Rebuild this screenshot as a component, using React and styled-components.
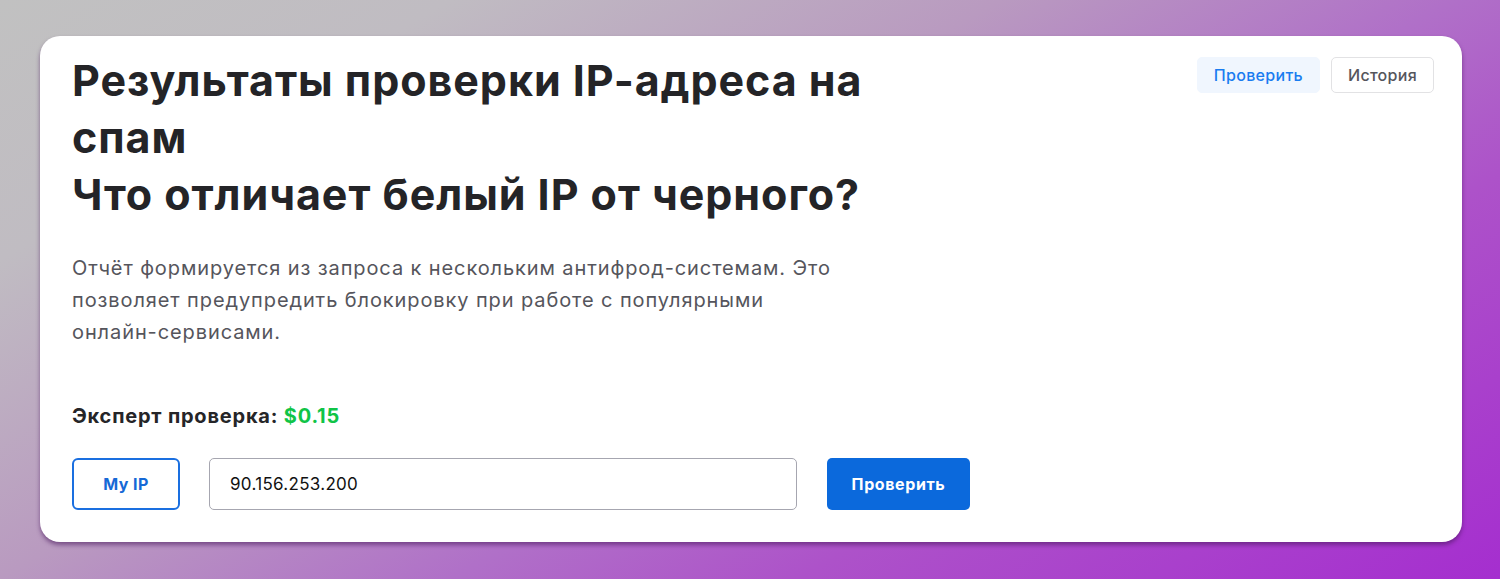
import React from "react";
import styled, { createGlobalStyle } from "styled-components";

const GlobalStyle = createGlobalStyle`
  html, body {
    margin: 0;
    padding: 0;
  }
  body {
    font-family: Inter, "Noto Sans", sans-serif;
    background: linear-gradient(150deg, #c1c1c1 0%, #c0bcc2 18%, #b99ac0 40%, #b070c8 58%, #ad52c9 72%, #a52ecf 100%);
    min-height: 579px;
  }
`;

const Page = styled.div`
  padding: 36px 38px 36px 40px;
  box-sizing: border-box;
  height: 579px;
`;

const Card = styled.div`
  display: flex;
  justify-content: space-between;
  align-items: flex-start;
  background: #fff;
  border-radius: 20px;
  padding: 16px 28px 32px 32px;
  box-shadow: 0 3px 4px rgba(70, 20, 90, 0.55);
`;

const Main = styled.div`
  flex: none;
`;

const Title = styled.h1`
  margin: 0;
  max-width: 820px;
  font-size: 43px;
  line-height: 57px;
  font-weight: 700;
  color: #242427;
  letter-spacing: 0.95px;
`;

const Lead = styled.p`
  margin: 29px 0 0;
  width: 770px;
  font-size: 20px;
  line-height: 32px;
  color: #55555c;
  letter-spacing: 0.9px;
`;

const Price = styled.div`
  margin-top: 55px;
  font-size: 20px;
  line-height: 26px;
  font-weight: 700;
  color: #252528;
  letter-spacing: 0.8px;
`;

const Amount = styled.span`
  color: #10c447;
`;

const Form = styled.div`
  display: flex;
  gap: 29px;
  margin-top: 29px;
`;

const OutlineButton = styled.button`
  flex: none;
  width: 108px;
  height: 52px;
  border: 2px solid #1a6fe0;
  border-radius: 6px;
  background: #fff;
  color: #1669d6;
  font-family: inherit;
  font-size: 16px;
  font-weight: 700;
  letter-spacing: 0.4px;
`;

const IpInput = styled.input`
  flex: none;
  width: 588px;
  height: 52px;
  box-sizing: border-box;
  border: 1px solid #a6a6b0;
  border-radius: 5px;
  padding: 0 20px;
  font-family: inherit;
  font-size: 17px;
  color: #111;
  letter-spacing: 0.3px;
  outline: none;
`;

const PrimaryButton = styled.button`
  flex: none;
  width: 143px;
  height: 52px;
  margin-left: 1px;
  border: 0;
  border-radius: 5px;
  background: #0b69dc;
  color: #fff;
  font-family: inherit;
  font-size: 16px;
  font-weight: 700;
  letter-spacing: 0.6px;
`;

const Tabs = styled.div`
  display: flex;
  gap: 11px;
  margin-top: 5px;
`;

const Tab = styled.button`
  height: 36px;
  padding: 0 16px;
  border-radius: 5px;
  font-family: inherit;
  font-size: 16px;
  font-weight: 500;
  letter-spacing: 0.3px;
  border: 1px solid ${(p) => (p.$active ? "#f0f6fe" : "#e2e2e4")};
  background: ${(p) => (p.$active ? "#f0f6fe" : "#fff")};
  color: ${(p) => (p.$active ? "#1a7cf0" : "#55555c")};
`;

export default function App() {
  return (
    <>
      <GlobalStyle />
      <Page>
        <Card>
          <Main>
            <Title>
              Результаты проверки IP-адреса на спам
              <br />
              Что отличает белый IP от черного?
            </Title>
            <Lead>
              Отчёт формируется из запроса к нескольким антифрод-системам. Это
              позволяет предупредить блокировку при работе с популярными
              онлайн-сервисами.
            </Lead>
            <Price>
              Эксперт проверка: <Amount>$0.15</Amount>
            </Price>
            <Form>
              <OutlineButton>My IP</OutlineButton>
              <IpInput defaultValue="90.156.253.200" />
              <PrimaryButton>Проверить</PrimaryButton>
            </Form>
          </Main>
          <Tabs>
            <Tab $active>Проверить</Tab>
            <Tab>История</Tab>
          </Tabs>
        </Card>
      </Page>
    </>
  );
}
